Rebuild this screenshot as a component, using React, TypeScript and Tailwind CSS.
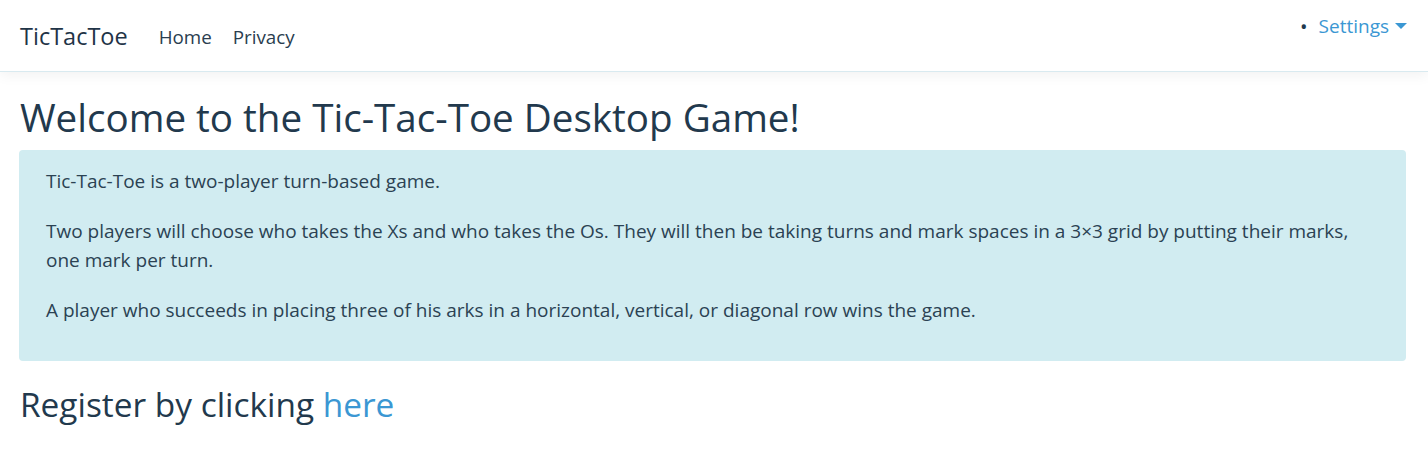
export default function App() {
  return (
    <div className="min-h-[457px] bg-white text-[#22394d] font-['Open_Sans',sans-serif]">
      <nav className="flex h-[72px] justify-between border-b border-[#d9eaf0] bg-white pl-[20px] pr-[21px] shadow-[0_4px_12px_rgba(0,0,0,0.05)]">
        <div className="flex items-start">
          <a className="mt-[20px] text-[23.5px] leading-[32px] text-[#1f3447]">TicTacToe</a>
          <div className="ml-[31px] mt-[24px] flex gap-[21px] text-[18.8px] leading-[26px] text-[#2a3d4f]">
            <a>Home</a>
            <a>Privacy</a>
          </div>
        </div>
        <div className="flex items-start pt-[12px]">
          <span className="mr-[11px] mt-[1px] text-[20px] leading-[28px] text-[#22394d]">•</span>
          <a className="text-[19px] leading-[28px] text-[#3b97d3]">Settings</a>
          <span className="ml-[6px] mt-[11px] h-0 w-0 border-x-[6px] border-t-[6px] border-x-transparent border-t-[#3b97d3]" />
        </div>
      </nav>
      <main className="pl-[19px] pr-[22px] pt-[21px]">
        <h1 className="pl-[1px] text-[38.6px] leading-[48px]">Welcome to the Tic-Tac-Toe Desktop Game!</h1>
        <div className="mt-[9px] rounded-[4px] bg-[#d1ecf1] px-[27px] pb-[36px] pt-[17px] text-[19px] leading-[29px] text-[#2b4253]">
          <p className="mb-[21px]">Tic-Tac-Toe is a two-player turn-based game.</p>
          <p className="mb-[21px]">
            Two players will choose who takes the Xs and who takes the Os. They will then be taking turns and mark spaces in a 3×3 grid by putting their marks, one mark per turn.
          </p>
          <p>A player who succeeds in placing three of his arks in a horizontal, vertical, or diagonal row wins the game.</p>
        </div>
        <h2 className="mt-[23px] pl-[1px] text-[33.4px] leading-[40px]">
          Register by clicking <a className="text-[#3b97d3]">here</a>
        </h2>
      </main>
    </div>
  );
}
